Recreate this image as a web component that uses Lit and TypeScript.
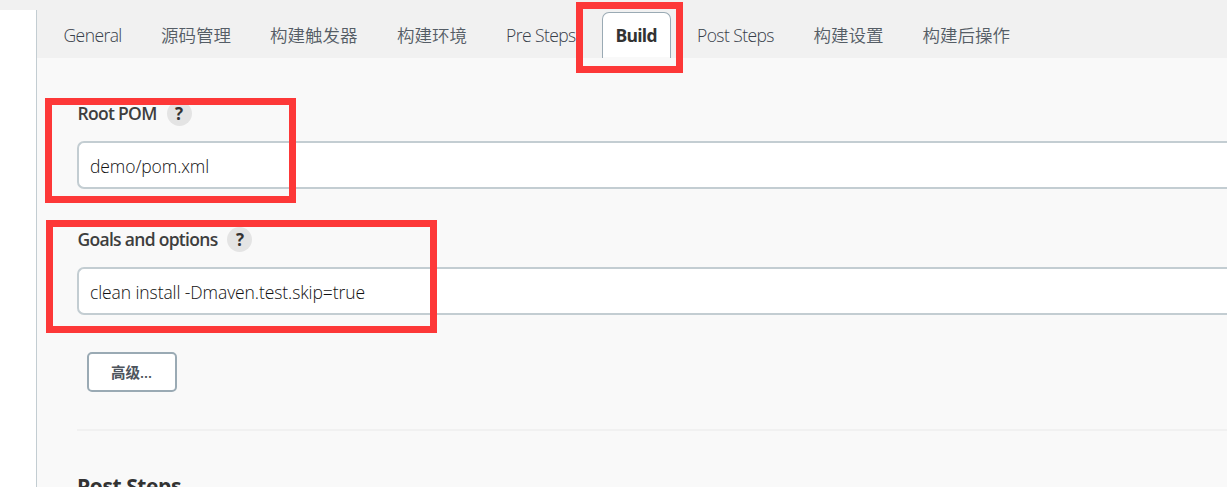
import { LitElement, html, css } from "lit";
import { customElement, property } from "lit/decorators.js";
import { classMap } from "lit/directives/class-map.js";

const TABS = ["General", "源码管理", "构建触发器", "构建环境", "Pre Steps", "Build", "Post Steps", "构建设置", "构建后操作"];

@customElement("config-tabs")
class ConfigTabs extends LitElement {
  @property() active = "Build";
  static styles = css`
    :host { display: block; background: #f1f1f1; }
    nav {
      display: grid; box-sizing: border-box; height: 58px; padding: 12px 0 0 12px;
      grid-template-columns: 97.5px 109px 127px 109px 111px 80px 116.5px 109px 116px;
    }
    .tab {
      justify-self: start; box-sizing: border-box; height: 46px; padding: 0 13px 0 13.5px;
      border: 1px solid transparent; border-bottom: 0; border-radius: 7px 7px 0 0;
      font-size: 17.5px; line-height: 44px; font-weight: 350; color: #555d66; white-space: nowrap;
    }
    .latin { line-height: 45px; letter-spacing: -0.57px; color: #38404a; }
    .active {
      width: 69px; padding-left: 13px; margin-left: -1px; background: linear-gradient(#fff 0 44px, #f9f9f9 44px); border-color: #9aaab4;
      color: #333; font-weight: 700; letter-spacing: -0.75px;
    }
  `;
  render() {
    return html`<nav>${TABS.map((t) => html`<div class=${classMap({
      tab: true, latin: /^[A-Z]/.test(t), active: t === this.active,
    })}>${t}</div>`)}</nav>`;
  }
}

@customElement("config-field")
class ConfigField extends LitElement {
  @property() label = "";
  @property() value = "";
  static styles = css`
    :host { display: block; height: 126px; }
    .label { display: flex; align-items: center; gap: 10px; height: 25px; padding-left: 0.5px; font-size: 17.5px; line-height: 25px; font-weight: 600; letter-spacing: -0.7px; color: #3e3e3e; white-space: nowrap; }
    .name { height: 25px; }
    .help { width: 25px; height: 25px; border-radius: 50%; background: #e4e4e4; text-align: center; font-size: 17px; line-height: 26px; font-weight: 700; letter-spacing: 0; color: #333; }
    .box {
      box-sizing: border-box; height: 48px; margin-top: 15px; padding: 0 11px;
      border: 2px solid #c3cdd2; border-right: 0; border-radius: 7px 0 0 7px; background: #fff;
      font-size: 17.5px; font-weight: 300; line-height: 46px; letter-spacing: -0.09px; color: #111;
    }
  `;
  render() {
    return html`<div class="label"><span class="name">${this.label}</span><span class="help">?</span></div>
      <div class="box">${this.value}</div>`;
  }
}

@customElement("app-root")
class AppRoot extends LitElement {
  static styles = css`
    :host {
      display: block; position: relative; width: 1227px; height: 487px; overflow: hidden;
      background: #fff; font-family: "Open Sans", "Noto Sans CJK SC", sans-serif;
    }
    .page { display: grid; grid-template-columns: 36px 1fr; height: 487px; }
    .side { border-top: 10px solid #f1f1f1; background: #fff; }
    .main { display: flex; min-width: 0; background: linear-gradient(#f1f1f1 0 10px, #c3cdd2 10px); padding-left: 1px; }
    .panel { flex: 1; min-width: 0; background: #f9f9f9; }
    .form { padding: 43px 0 0 40px; }
    .more-row { height: 40px; margin-top: -1px; }
    .more {
      display: block; box-sizing: border-box; width: 90px; height: 40px; margin-left: 10px; padding: 1px 1px 0 0;
      border: 2px solid #9aaab4; border-radius: 5px; background: #fff; color: #4d545d;
      font: 600 14.5px/36px "Open Sans", "Noto Sans CJK SC", sans-serif;
    }
    .rule { height: 2px; margin-top: 37px; background: #f1f1f1; }
    h2 { margin: 41px 0 0; font-size: 21px; line-height: 28px; letter-spacing: -0.4px; color: #333; white-space: nowrap; }
    .mark { position: absolute; box-sizing: border-box; border: 7px solid #fd3838; }
    .m1 { left: 576px; top: 2px; width: 107px; height: 71px; }
    .m2 { left: 45px; top: 98px; width: 251px; height: 105px; }
    .m3 { left: 46px; top: 220px; width: 391px; height: 113px; }
  `;
  render() {
    return html`<div class="page">
        <div class="side"></div>
        <div class="main"><div class="panel">
          <config-tabs></config-tabs>
          <div class="form">
            <config-field label="Root POM" value="demo/pom.xml"></config-field>
            <config-field label="Goals and options" value="clean install -Dmaven.test.skip=true"></config-field>
            <div class="more-row"><button class="more">高级...</button></div>
            <div class="rule"></div>
            <h2>Post Steps</h2>
          </div>
        </div></div>
      </div>
      <div class="mark m1"></div><div class="mark m2"></div><div class="mark m3"></div>`;
  }
}
